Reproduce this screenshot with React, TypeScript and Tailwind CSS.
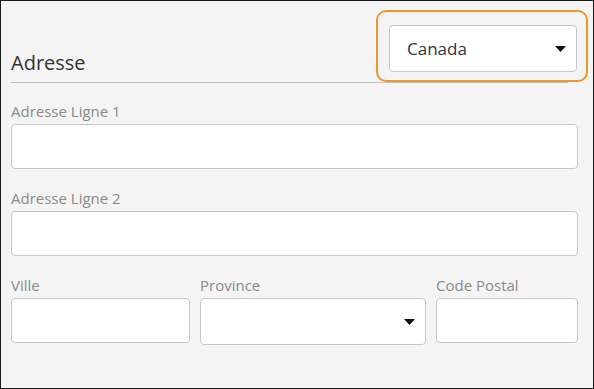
import React from "react";

const font = { fontFamily: '"Open Sans", "Noto Sans", sans-serif' };

function Caret() {
  return (
    <svg width="11" height="6" viewBox="0 0 11 6" className="block">
      <path d="M0 0 L11 0 L5.5 6 Z" fill="#111" />
    </svg>
  );
}

function Label({ children }: { children: React.ReactNode }) {
  return <div className="text-[15px] leading-[21px] text-[#8a8a8a] mb-[2px]">{children}</div>;
}

function Input({ className = "" }: { className?: string }) {
  return <div className={"h-[45px] bg-white border border-[#c6c6c6] rounded-[4px] " + className} />;
}

export default function App() {
  return (
    <div
      style={font}
      className="relative w-[594px] h-[389px] border border-[#1a1a1a] bg-[#f4f4f4] pl-[10px] pr-[15px]"
    >
      <div className="flex justify-between items-start h-[81px]">
        <div className="mt-[50px] text-[20px] leading-[24px] text-[#333]">Adresse</div>
        <div className="mt-[24px] mr-[1px] w-[188px] h-[47px] bg-white border border-[#c6c6c6] rounded-[4px] flex items-center justify-between pl-[17px] pr-[10px]">
          <span className="text-[17px] text-[#2e3440]">Canada</span>
          <Caret />
        </div>
      </div>
      <div className="w-[557px] h-px bg-[#bdbdbd]" />

      <div className="mt-[18px]">
        <Label>Adresse Ligne 1</Label>
        <Input />
      </div>
      <div className="mt-[19px]">
        <Label>Adresse Ligne 2</Label>
        <Input />
      </div>
      <div className="mt-[19px] flex gap-[10px] items-start">
        <div className="w-[179px]">
          <Label>Ville</Label>
          <Input />
        </div>
        <div className="w-[226px]">
          <Label>Province</Label>
          <div className="h-[47px] bg-white border border-[#c6c6c6] rounded-[4px] flex items-center justify-end pr-[10px]">
            <Caret />
          </div>
        </div>
        <div className="flex-1">
          <Label>Code Postal</Label>
          <Input />
        </div>
      </div>

      <div className="absolute left-[375px] top-[9px] w-[212px] h-[72px] border-2 border-[#e89a2e] rounded-[10px] pointer-events-none" />
    </div>
  );
}
